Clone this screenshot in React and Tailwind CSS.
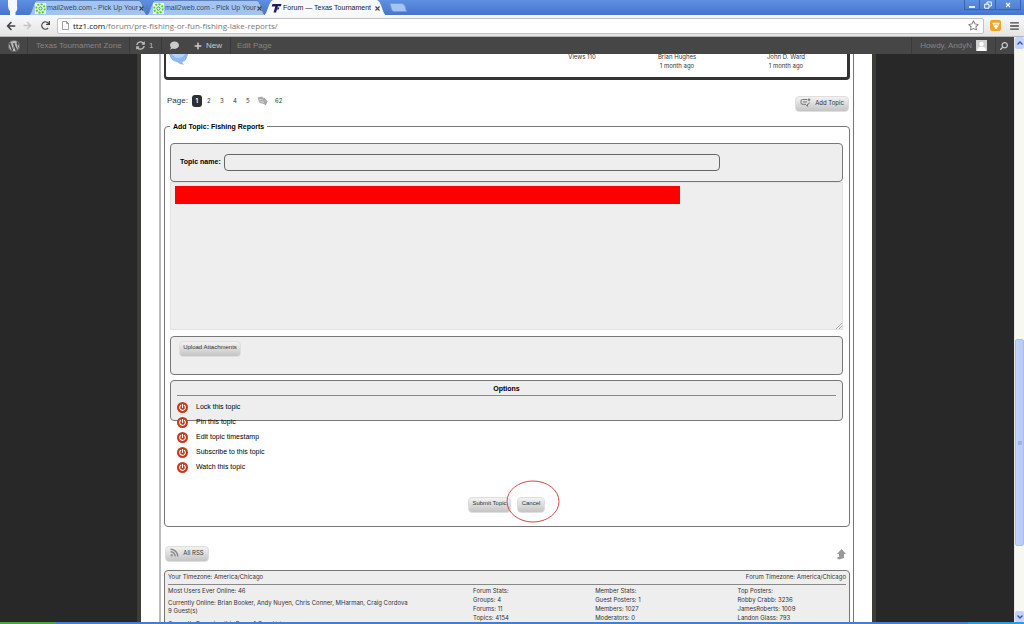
import React from "react";
import {
  FaWordpress,
  FaSyncAlt,
  FaComment,
  FaPlus,
  FaArrowLeft,
  FaArrowRight,
  FaRedo,
  FaRegStar,
  FaSearch,
  FaPowerOff,
  FaRss,
  FaBars,
} from "react-icons/fa";

const OPTIONS = [
  "Lock this topic",
  "Pin this topic",
  "Edit topic timestamp",
  "Subscribe to this topic",
  "Watch this topic",
];

const STATS = [
  { title: "Forum Stats:", rows: ["Groups: 4", "Forums: 11", "Topics: 4154"] },
  { title: "Member Stats:", rows: ["Guest Posters: 1", "Members: 1027", "Moderators: 0"] },
  { title: "Top Posters:", rows: ["Robby Crabb: 3236", "JamesRoberts: 1009", "Landon Glass: 793"] },
];

function MailIcon() {
  return (
    <svg className="w-[11px] h-[11px] shrink-0" viewBox="0 0 11 11">
      <rect width="11" height="11" fill="#e9fbe6" />
      <circle cx="5.5" cy="5.5" r="4.3" fill="none" stroke="#3fd02c" strokeWidth="1.8" strokeDasharray="2 1.3" />
      <circle cx="5.5" cy="5.5" r="1.6" fill="none" stroke="#35a827" strokeWidth="1" />
    </svg>
  );
}

function TexasIcon() {
  return (
    <svg className="w-[11px] h-[9px] shrink-0" viewBox="0 0 10 9">
      <path d="M1 0H10L9.4 2.2H6.4L6 3.4H8L7.2 5.4H5.4L4.6 8.6H2L3.8 2.4H0.2Z" fill="#211a55" />
      <path d="M5.4 3.4L7 3.8L6 5Z" fill="#8a84b4" />
    </svg>
  );
}

function Tab({ icon, title, active }) {
  return (
    <div className={`relative flex items-center h-[15px] pl-[6px] pr-1 ${active ? "w-[120px]" : "w-[118px]"}`}>
      <svg className="absolute inset-0 w-full h-full" viewBox="0 0 118 15" preserveAspectRatio="none">
        <path
          d="M0 15C3 14 4 1 8 0.5H110C114 1 115 14 118 15"
          fill={active ? "#f8f9fb" : "#a3c3f3"}
          stroke={active ? "#f8f9fb" : "#5c83bd"}
          strokeWidth="1"
        />
      </svg>
      <div className="relative flex items-center gap-px w-full mt-px">
        {icon}
        <span className={`flex-1 whitespace-nowrap text-[7px] ${active ? "text-[#222]" : "text-[#33496d]"}`}>
          {title}
        </span>
        <button aria-label="Close tab" className="mr-px text-[#444]">
          <svg className="w-[5px] h-[5px]" viewBox="0 0 5 5">
            <path d="M0.5 0.5L4.5 4.5M4.5 0.5L0.5 4.5" stroke="currentColor" strokeWidth="1.1" />
          </svg>
        </button>
      </div>
    </div>
  );
}

function BrowserChrome() {
  return (
    <header className="shrink-0">
      <div className="flex h-[15px] bg-linear-to-b from-[#5e8fe0] to-[#4676cc]">
        <svg className="w-[29px] h-[15px] shrink-0" viewBox="0 0 29 15">
          <path d="M8 0H17V6Q18 10 15.5 12V15H10V11Q8 9 8 6Z" fill="#f5f8fd" />
        </svg>
        <Tab icon={<MailIcon />} title="mail2web.com - Pick Up Your" />
        <Tab icon={<MailIcon />} title="mail2web.com - Pick Up Your" />
        <Tab icon={<TexasIcon />} title="Forum — Texas Tournament" active />
        <button aria-label="New tab" className="h-full px-1">
          <svg className="w-[18px] h-[9px]" viewBox="0 0 18 9">
            <path d="M1 0.5H13Q15 0.5 16 3L17.5 8.5H5Q3 8.5 2.5 6Z" fill="#a3c5f6" stroke="#6d97d8" strokeWidth="0.8" />
          </svg>
        </button>
        <div className="ml-auto mr-[3px] flex h-[10px] text-white">
          <button aria-label="Minimize" className="w-4 border border-t-0 border-[#3a62ad] flex items-center justify-center">
            <svg className="w-2 h-2" viewBox="0 0 8 8"><path d="M1 6H7" stroke="currentColor" strokeWidth="1.6" /></svg>
          </button>
          <button aria-label="Restore" className="w-[15px] border-b border-[#3a62ad] flex items-center justify-center">
            <svg className="w-2 h-2" viewBox="0 0 8 8">
              <path d="M3 3V1H7.3V5H5.5M0.7 3.2H5V7.2H0.7Z" fill="none" stroke="currentColor" />
            </svg>
          </button>
          <button aria-label="Close" className="w-[26px] border border-t-0 border-[#3a62ad] flex items-center justify-center">
            <svg className="w-[6px] h-[6px]" viewBox="0 0 6 6"><path d="M1 1L5 5M5 1L1 5" stroke="currentColor" strokeWidth="1.2" /></svg>
          </button>
        </div>
      </div>

      <div className="flex items-center h-[22px] pl-1 pr-[5px] bg-linear-to-b from-[#f8f9fb] to-[#e4e4e4] border-b border-[#b5b5b5]">
        <button aria-label="Back" className="w-[19px] text-[#444]"><FaArrowLeft className="w-[10px] h-[10px] ml-[2px]" /></button>
        <button aria-label="Forward" className="w-[18px] text-[#c4c4c4]"><FaArrowRight className="w-[9px] h-[9px]" /></button>
        <button aria-label="Reload" className="w-4 text-[#444]"><FaRedo className="w-[9px] h-[9px]" /></button>
        <div className="flex flex-1 items-center h-4 pl-1 pr-1 bg-white border border-[#c2c2c2] rounded-xs">
          <svg className="w-[7px] h-[9px] shrink-0" viewBox="0 0 7 9">
            <path d="M0.5 0.5H4.5L6.5 2.5V8.5H0.5ZM4.5 0.5V2.5H6.5" fill="#fff" stroke="#888" strokeWidth="0.8" />
          </svg>
          <div className="flex-1 pl-1 text-[8px] whitespace-nowrap font-['Open_Sans',sans-serif] text-[#777]">
            <span className="text-[#111]">ttz1.com</span>/forum/pre-fishing-or-fun-fishing-lake-reports/
          </div>
          <FaRegStar className="w-[11px] h-[11px] text-[#777]" />
        </div>
        <button aria-label="Extension" className="ml-[6px] w-[11px] h-[11px] rounded-xs bg-[#f0a524] flex items-center justify-center">
          <svg className="w-2 h-2" viewBox="0 0 8 8"><path d="M0.8 1.2H7.2L4 7Z M2.5 1.2L4 6L5.5 1.2" fill="none" stroke="#fff" /></svg>
        </button>
        <button aria-label="Menu" className="ml-[9px] text-[#444]"><FaBars className="w-[9px] h-[10px]" /></button>
      </div>
    </header>
  );
}

function AdminBar() {
  return (
    <nav className="shrink-0 flex items-center h-[17px] bg-[#464646] text-[8px] text-[#858585] whitespace-nowrap">
      <a href="#" aria-label="WordPress" className="flex items-center justify-center w-7 h-full border-r border-[#3a3a3a] text-[#bbb]">
        <FaWordpress className="w-3 h-3" />
      </a>
      <a href="#" className="w-[101px] pl-2">Texas Tournament Zone</a>
      <a href="#" className="flex items-center gap-1 w-[32px] h-full pl-[6px] border-l border-[#3a3a3a] text-[#bbb]">
        <FaSyncAlt className="w-[9px] h-[9px]" />1
      </a>
      <a href="#" aria-label="Comments" className="flex items-center w-[27px] h-full pl-2 border-l border-[#3a3a3a] text-[#ccc]">
        <FaComment className="w-[9px] h-[9px]" />
      </a>
      <a href="#" className="flex items-center gap-1 w-[42px] h-full pl-[6px] text-[#ccc]">
        <FaPlus className="w-2 h-2" />New
      </a>
      <a href="#" className="flex items-center h-full pl-[6px] border-l border-[#3a3a3a]">Edit Page</a>
      <a href="#" className="ml-auto flex items-center gap-1 h-full pl-2 pr-2 border-l border-[#3a3a3a]">
        Howdy, AndyN
        <svg className="w-[11px] h-[11px]" viewBox="0 0 11 11">
          <rect width="11" height="11" fill="#cfcfcf" />
          <circle cx="5.5" cy="4" r="2.2" fill="#fff" />
          <path d="M1 11Q1 7 5.5 6.6Q10 7 10 11Z" fill="#fff" />
        </svg>
      </a>
      <button aria-label="Search" className="flex items-center h-full pl-1 pr-[6px] border-l border-[#3a3a3a] text-[#ccc]">
        <FaSearch className="w-2 h-2 -scale-x-100" />
      </button>
    </nav>
  );
}

function SilverButton({ children, className }) {
  return (
    <button
      className={`inline-flex items-center justify-center gap-1 h-4 pb-[3px] rounded-sm border border-[#dedede] bg-linear-to-b from-[#f3f3f3] to-[#c4c4c4] text-[#333] whitespace-nowrap ${className}`}
    >
      {children}
    </button>
  );
}

function LastTopic() {
  return (
    <section className="relative h-[26px] border-[3px] border-t-0 border-l-2 border-[#333] rounded-b-sm overflow-hidden font-['Inter',sans-serif] text-[6px] leading-[9px] text-[#333]">
      <svg className="absolute left-[3px] top-0 w-5 h-[11px]" viewBox="0 0 20 11">
        <path d="M0 0H19Q18 7 13 8L15 11Q10 10 8 8Q2 7 0 0Z" fill="#8fb8ee" />
        <path d="M3 0H16Q14 4 9 4Q5 4 3 0Z" fill="#b5d2f7" />
      </svg>
      <div className="flex justify-end text-center -mt-[2px]">
        <div className="w-[80px]">Views 110</div>
        <div className="w-[110px]">Brian Hughes<br />1 month ago</div>
        <div className="w-[108px]">John D. Ward<br />1 month ago</div>
        <div className="w-[7px]" />
      </div>
    </section>
  );
}

function Pager() {
  return (
    <div className="flex items-start justify-between mt-[14px] pl-[3px] pr-px">
      <div className="flex items-center h-[13px] font-['Inter',sans-serif] text-[6px] text-[#333]">
        <span className="mr-1 font-['Liberation_Sans',sans-serif] text-[8px]">Page:</span>
        <span className="flex items-center justify-center w-[10px] h-3 rounded-[3px] bg-[#2f2f2f] text-white font-bold">1</span>
        {["2", "3", "4", "5"].map((n) => (
          <a key={n} href="#" className="w-3 ml-px first:ml-0 text-center">{n}</a>
        ))}
        <svg className="w-[11px] h-[10px] ml-[3px]" viewBox="0 0 11 10">
          <path d="M0.5 1.5L5 0.5L7 2.5V1.5L10.8 5.5L8.5 9.5L7 8L2.5 7Z" fill="#aaa" />
          <path d="M1.5 3L6 4M2.5 5.5L7 6.3" stroke="#ddd" strokeWidth="0.8" />
        </svg>
        <a href="#" className="ml-[7px]">62</a>
      </div>
      <SilverButton className="mt-[2px] w-[54px] font-['Inter',sans-serif] text-[6px]">
        <svg className="w-[11px] h-[9px]" viewBox="0 0 11 9">
          <path d="M7 1.5H2.5Q1 1.5 1 3V4.8Q1 6.3 2.5 6.3H5.5L7.5 8.3V6.3Q9.3 6.3 9.3 4.5M2.8 3.9H7M9 0.3V3.3M7.5 1.8H10.5" fill="none" stroke="#666" strokeWidth="0.9" />
        </svg>
        Add Topic
      </SilverButton>
    </div>
  );
}

function TopicForm() {
  return (
    <fieldset className="mt-[10px] h-[405px] border border-[#777] rounded-sm pl-[5px] pr-[6px]">
      <legend className="px-[3px] text-[7px] leading-[9px] font-bold text-black">
        Add Topic: Fishing Reports
      </legend>

      <div className="flex items-center gap-[3px] mt-3 h-[39px] pl-[9px] bg-[#eee] border border-[#777] rounded-sm">
        <label htmlFor="topic" className="text-[7px] font-bold text-black whitespace-nowrap">Topic name:</label>
        <input id="topic" className="w-3/4 h-[17px] px-1 text-[7px] border border-[#666] rounded-sm bg-[#eee] outline-none" />
      </div>

      <div className="relative">
        <textarea
          aria-label="Topic content"
          className="block w-full h-[148px] resize-none bg-[#eee] border border-[#e2e2e2] outline-none text-[7px]"
        />
        <div className="absolute left-[5px] top-1 w-3/4 h-[18px] bg-[#f00]" />
        <svg className="absolute right-px bottom-px w-[6px] h-[6px]" viewBox="0 0 6 6">
          <path d="M0 6L6 0M3 6L6 3" stroke="#999" strokeWidth="0.8" />
        </svg>
      </div>

      <div className="mt-[6px] h-[39px] pl-2 pt-1 flex items-start bg-[#eee] border border-[#777] rounded-sm">
        <SilverButton className="w-[62px] text-[6px]">Upload Attachments</SilverButton>
      </div>

      {/* the list is taller than its panel and runs out below it */}
      <div className="mt-[5px] h-[41px] px-[6px] bg-[#eee] border border-[#777] rounded-sm">
        <h2 className="h-[15px] pt-[3px] text-center text-[7px] leading-[9px] font-bold text-black border-b border-[#888]">Options</h2>
        <ul className="mt-1">
          {OPTIONS.map((label) => (
            <li key={label}>
              <button className="flex items-center h-[15px] text-[7px] text-black">
                <span className="flex items-center justify-center w-[11px] h-[11px] mr-2 rounded-full bg-[#c8391b]">
                  <FaPowerOff className="w-[7px] h-[7px] text-white" />
                </span>
                {label}
              </button>
            </li>
          ))}
        </ul>
      </div>

      <div className="mt-[76px] flex justify-center gap-[6px]">
        <SilverButton className="w-[43px] text-[6px]">Submit Topic</SilverButton>
        <div className="relative flex">
          <SilverButton className="w-7 text-[6px]">Cancel</SilverButton>
          <svg className="absolute -left-[11px] -top-[17px] w-[54px] h-[43px]" viewBox="0 0 54 43">
            <ellipse cx="27" cy="21.5" rx="26" ry="20.5" fill="none" stroke="#d04848" strokeWidth="1" />
          </svg>
        </div>
      </div>
    </fieldset>
  );
}

function ForumStats() {
  return (
    <section className="mt-2 h-20 px-[3px] bg-[#eee] border border-[#777] rounded-sm font-['Inter',sans-serif] text-[6px] leading-[9px] text-[#333]">
      <div className="flex justify-between h-[14px] pt-px border-b border-[#888]">
        <span>Your Timezone: America/Chicago</span>
        <span>Forum Timezone: America/Chicago</span>
      </div>
      <div className="flex pt-px">
        <div className="w-[45%]">
          <p>Most Users Ever Online: 46</p>
          <p className="mt-1 leading-[8px]">
            Currently Online: Brian Booker, Andy Nuyen, Chris Conner, MHarman, Craig Cordova
            <br />9 Guest(s)
          </p>
          <p className="mt-1">Currently Browsing this Page: 1 Guest(s)</p>
        </div>
        {STATS.map((col) => (
          <ul key={col.title} className="w-[18%] last:w-[16%] last:ml-auto">
            <li>{col.title}</li>
            {col.rows.map((row) => <li key={row}>{row}</li>)}
          </ul>
        ))}
      </div>
    </section>
  );
}

function ScrollBar() {
  return (
    <div className="shrink-0 flex flex-col w-[10px] bg-[#f8f8f3] border-l border-[#e8e8e8]">
      <button aria-label="Scroll up" className="h-3 rounded-xs bg-[#c3d3fb] flex items-center justify-center">
        <svg className="w-[6px] h-1" viewBox="0 0 6 4"><path d="M0.5 3.5L3 1L5.5 3.5" fill="none" stroke="#3d5689" strokeWidth="1.3" /></svg>
      </button>
      <div className="grow-[292]" />
      <div className="grow-[202] rounded-xs bg-linear-to-r from-[#c8d6fd] to-[#b6c8f5] border border-[#aabfee] flex items-center justify-center">
        <span className="w-1 h-1 bg-[#9db4e6]" />
      </div>
      <div className="grow-[65]" />
      <button aria-label="Scroll down" className="h-[11px] rounded-xs bg-[#c3d3fb] flex items-center justify-center">
        <svg className="w-[6px] h-1" viewBox="0 0 6 4"><path d="M0.5 0.5L3 3L5.5 0.5" fill="none" stroke="#3d5689" strokeWidth="1.3" /></svg>
      </button>
    </div>
  );
}

export default function App() {
  return (
    <div className="h-screen flex flex-col overflow-hidden bg-[#282828] font-['Liberation_Sans',Arial,sans-serif]">
      <BrowserChrome />
      <div className="flex flex-1 min-h-0">
        <div className="flex flex-col flex-1 min-w-0">
          <AdminBar />
          <main className="flex-1 min-h-0 overflow-hidden pl-[137px] pr-[138px]">
            <div className="min-h-full px-[18px] bg-white border-x-4 border-[#3d3d38]">
              <div className="px-[3px] border-l-2 border-l-[#bbb] border-r border-r-[#777]">
                <LastTopic />
                <Pager />
                <TopicForm />
                <div className="flex items-center justify-between mt-[19px] pl-px pr-1">
                  <SilverButton className="w-[44px] font-['Inter',sans-serif] text-[6px]">
                    <FaRss className="w-[9px] h-[9px] text-[#888]" />
                    All RSS
                  </SilverButton>
                  <a href="#" aria-label="Back to top">
                    <svg className="w-[10px] h-[11px]" viewBox="0 0 10 11">
                      <path d="M5.5 0L10 5H8V9L3 10.5L0.5 9L3 7.5V5H1Z" fill="#999" />
                    </svg>
                  </a>
                </div>
                <ForumStats />
              </div>
            </div>
          </main>
        </div>
        <ScrollBar />
      </div>
      <footer className="shrink-0 flex h-[2px] bg-[#3f7fdc]">
        <div className="w-14 bg-[#4fa04a]" />
        <div className="ml-auto w-14 bg-[#22a0e4]" />
      </footer>
    </div>
  );
}
